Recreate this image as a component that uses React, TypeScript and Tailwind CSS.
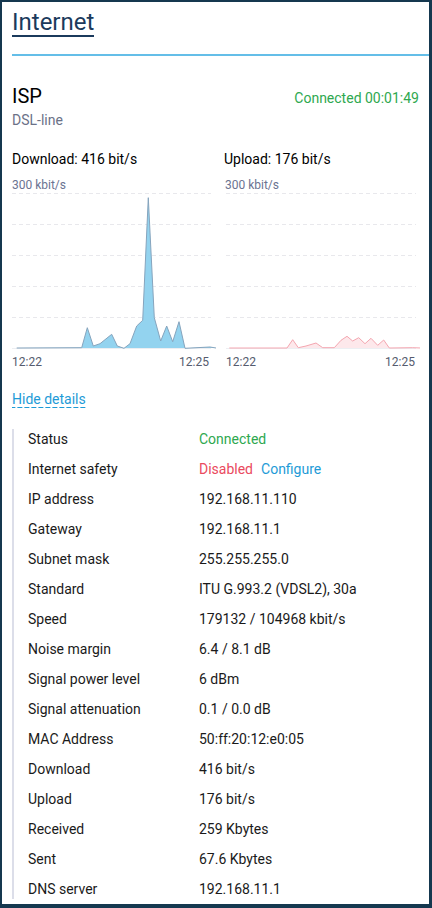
const rows: [string, string][] = [
  ["IP address", "192.168.11.110"],
  ["Gateway", "192.168.11.1"],
  ["Subnet mask", "255.255.255.0"],
  ["Standard", "ITU G.993.2 (VDSL2), 30a"],
  ["Speed", "179132 / 104968 kbit/s"],
  ["Noise margin", "6.4 / 8.1 dB"],
  ["Signal power level", "6 dBm"],
  ["Signal attenuation", "0.1 / 0.0 dB"],
  ["MAC Address", "50:ff:20:12:e0:05"],
  ["Download", "416 bit/s"],
  ["Upload", "176 bit/s"],
  ["Received", "259 Kbytes"],
  ["Sent", "67.6 Kbytes"],
  ["DNS server", "192.168.11.1"],
];

const downPts: [number, number][] = [
  [16.7, 347], [81.7, 346.7], [87.3, 326.7], [93.3, 345], [100, 342.7], [111.7, 333.3],
  [117.3, 345], [124, 347.3], [130, 342.7], [136.7, 325], [142.7, 319.3], [148.3, 196.7],
  [154.3, 316.7], [160.7, 340], [166.7, 325], [172.7, 340.7], [179, 320.7], [185, 347.3],
  [210, 346], [216, 347],
];

const upPts: [number, number][] = [
  [229.3, 347], [287, 347], [292.7, 338.7], [298.3, 346.7], [306, 345], [316, 342],
  [322.7, 346.7], [334.3, 346.7], [341, 339.3], [347, 335.3], [352.7, 340], [358.7, 336.7],
  [365, 342.7], [371, 337.3], [377.7, 344.3], [383.7, 339], [389.3, 347], [412.7, 346.7],
  [421, 347],
];

const Chart = ({
  x0,
  width,
  gx0,
  gx1,
  pts,
  fill,
  stroke,
}: {
  x0: number;
  width: number;
  gx0: number;
  gx1: number;
  pts: [number, number][];
  fill: string;
  stroke: string;
}) => {
  const line = pts.map(([x, y]) => `${x},${y}`).join(" ");
  const area = `${pts[0][0]},347 ${line} ${pts[pts.length - 1][0]},347`;
  return (
    <svg width={width} height={160} viewBox={`${x0} 191 ${width} 160`} className="block">
      {[192, 223, 254, 285, 316].map((y) => (
        <line key={y} x1={gx0} x2={gx1} y1={y + 0.5} y2={y + 0.5} stroke="#e8e8ec" strokeDasharray="4 3" />
      ))}
      <line x1={gx0} x2={gx1} y1={347.5} y2={347.5} stroke="#eceef2" />
      <polygon points={area} fill={fill} />
      <polyline points={line} fill="none" stroke={stroke} strokeWidth={1} strokeLinejoin="round" />
    </svg>
  );
};

export default function App() {
  return (
    <div
      className="w-[432px] h-[908px] bg-[#15384f] pt-[2px] pl-[2px] pr-[3px] pb-[4px]"
      style={{ fontFamily: "Roboto, 'Liberation Sans', sans-serif" }}
    >
      <div className="h-full bg-white pt-[7px] text-[#1a1a1a] overflow-hidden">
        <div className="ml-[10px] border-b-2 border-[#64bee8] pb-[17px]">
          <h1 className="inline-block text-[24px] leading-[26px] text-[#1b3a5c] border-b-2 border-[#1b3a5c]">
            Internet
          </h1>
        </div>

        <div className="px-[10px]">
          <div className="mt-[28px] flex items-baseline justify-between">
            <div className="text-[20px] leading-[24px] text-black">ISP</div>
            <div className="text-[14px] leading-5 text-[#2ea84f]">Connected 00:01:49</div>
          </div>
          <div className="mt-[2px] text-[14px] leading-5 text-[#6b7187]">DSL-line</div>

          <div className="mt-[19px] grid grid-cols-[204px_196px] gap-x-[8px]">
            <div>
              <div className="text-[14px] leading-5 text-black">Download: 416 bit/s</div>
              <div className="mt-[9px] text-[12px] leading-[14px] text-[#6b7391]">300 kbit/s</div>
              <Chart x0={12} width={204} gx0={12} gx1={211} pts={downPts} fill="#93d3ef" stroke="#86a4bd" />
              <div className="mt-[2px] flex justify-between pr-[7px] text-[12px] leading-4 text-[#555b6e]">
                <span>12:22</span>
                <span>12:25</span>
              </div>
            </div>
            <div>
              <div className="text-[14px] leading-5 text-black">Upload: 176 bit/s</div>
              <div className="mt-[9px] pl-[1px] text-[12px] leading-[14px] text-[#6b7391]">300 kbit/s</div>
              <Chart x0={224} width={196} gx0={226} gx1={416} pts={upPts} fill="#fde8eb" stroke="#f4a6b0" />
              <div className="mt-[2px] flex justify-between pl-[2px] pr-[5px] text-[12px] leading-4 text-[#555b6e]">
                <span>12:22</span>
                <span>12:25</span>
              </div>
            </div>
          </div>

          <div className="mt-[17px]">
            <span className="inline-block text-[14px] leading-[17px] text-[#1e9bd7] bg-[linear-gradient(to_right,#1e9bd7_5px,transparent_5px)] bg-[length:7px_1px] bg-repeat-x bg-bottom">
              Hide details
            </span>
          </div>

          <div className="mt-[18px] border-l-2 border-[#dcdee9] pl-[14px] flex flex-col gap-[10px] text-[14px] leading-5 text-[#1a1a1a]">
            <div className="grid grid-cols-[171px_1fr]">
              <span>Status</span>
              <span className="text-[#2ea84f]">Connected</span>
            </div>
            <div className="grid grid-cols-[171px_1fr]">
              <span>Internet safety</span>
              <span>
                <span className="text-[#ea4a5e]">Disabled</span>
                <span className="ml-2 text-[#1e9bd7]">Configure</span>
              </span>
            </div>
            {rows.map(([k, v]) => (
              <div key={k} className="grid grid-cols-[171px_1fr]">
                <span>{k}</span>
                <span>{v}</span>
              </div>
            ))}
          </div>
        </div>
      </div>
    </div>
  );
}
